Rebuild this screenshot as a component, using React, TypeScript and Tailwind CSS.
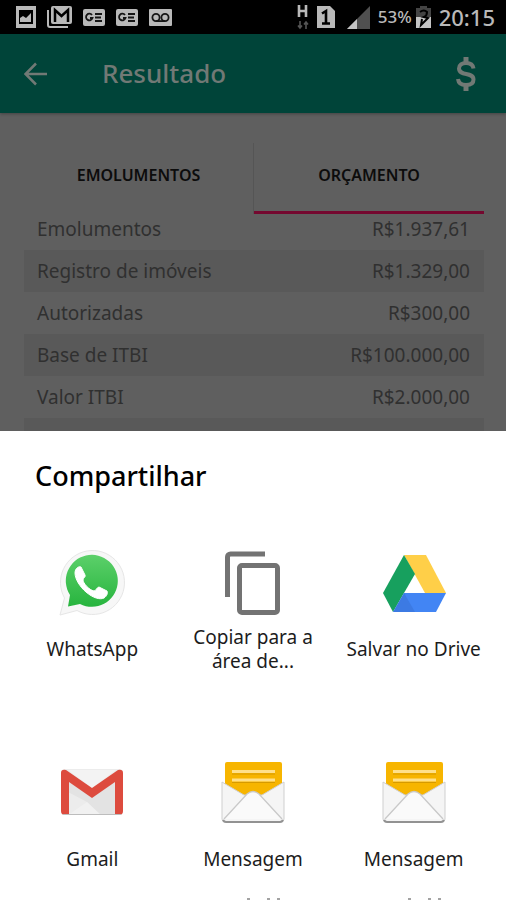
import type { ReactNode } from "react";

const budget = [
  ["Emolumentos", "R$1.937,61"],
  ["Registro de imóveis", "R$1.329,00"],
  ["Autorizadas", "R$300,00"],
  ["Base de ITBI", "R$100.000,00"],
  ["Valor ITBI", "R$2.000,00"],
  ["", ""],
];

function StatusBar() {
  return (
    <div className="flex h-[34px] shrink-0 items-center justify-between bg-black pl-4 pr-[11px] text-[#b9b9b9]">
      <div className="flex items-center gap-[11px]">
        <svg width="20" height="22" viewBox="0 0 20 22" aria-hidden="true">
          <path d="M0 0h20v22H0zM3 4v14h14V4z" fill="#b9b9b9" fillRule="evenodd" />
          <path d="M4 16v-4l3-2 3 2 5-5v9z" fill="#b9b9b9" />
        </svg>
        <svg width="25" height="22" viewBox="0 0 25 22" aria-hidden="true">
          <path d="M1 4v15a2 2 0 0 0 2 2h18" fill="none" stroke="#b9b9b9" strokeWidth="2" />
          <rect x="4" y="0" width="21" height="18" rx="2" fill="#b9b9b9" />
          <path d="M8 16V4l6.500 6L21 4v12" fill="none" stroke="#000" strokeWidth="2.500" />
        </svg>
        <NewsIcon />
        <NewsIcon />
        <svg width="23" height="17" viewBox="0 0 23 17" aria-hidden="true">
          <rect width="23" height="17" rx="1" fill="#b9b9b9" />
          <g fill="none" stroke="#151515" strokeWidth="1.800">
            <circle cx="7" cy="8.500" r="3.600" />
            <circle cx="16" cy="8.500" r="3.600" />
            <path d="M7 12.100h9" />
          </g>
        </svg>
      </div>
      <div className="flex items-center">
        <svg width="12" height="26" viewBox="0 0 12 26" className="mr-2" aria-hidden="true">
          <path d="M2 1v12M9 1v12M2 7h7" stroke="#b9b9b9" strokeWidth="2.600" />
          <path d="M3 17v7M1 21.500 3 24l2-2.500M9 25v-7M7 20.500 9 18l2 2.500" fill="none" stroke="#555" strokeWidth="1.600" />
        </svg>
        <svg width="18" height="22" viewBox="0 0 18 22" className="mr-3" aria-hidden="true">
          <path d="M0 0h13l5 5v17H0z" fill="#b9b9b9" />
          <path d="M5 7.500 9 5v12M5 17.500h8" fill="none" stroke="#000" strokeWidth="2.600" />
        </svg>
        <svg width="23" height="23" viewBox="0 0 23 23" className="mr-2" aria-hidden="true">
          <path d="M23 0v23H0z" fill="#505050" />
          <path d="M10 13v10H0z" fill="#c4c4c4" />
        </svg>
        <span className="text-[17px] font-medium">53%</span>
        <svg width="15" height="22" viewBox="0 0 15 22" className="ml-1 mr-2" aria-hidden="true">
          <path d="M4 0h7v2h4v20H0V2h4z" fill="#444" />
          <path d="M0 11h15v11H0z" fill="#c4c4c4" />
          <path d="M4 6q4-3 7 0 0 4-3 5l4 1-7 7 1-6" fill="none" stroke="#000" strokeWidth="2" />
        </svg>
        <span className="text-[22px] font-medium">20:15</span>
      </div>
    </div>
  );
}

function NewsIcon() {
  return (
    <svg width="22" height="17" viewBox="0 0 22 17" aria-hidden="true">
      <rect width="22" height="17" rx="2" fill="#b9b9b9" />
      <path d="M9 6a3.300 3.300 0 1 0 .5 3H7M12 5h7M12 8.500h6M12 12h7" fill="none" stroke="#151515" strokeWidth="1.800" />
    </svg>
  );
}

function WhatsAppIcon() {
  return (
    <svg width="70" height="70" viewBox="0 0 70 70" aria-hidden="true">
      <defs>
        <linearGradient id="wa" x1="0" y1="0" x2="0" y2="1">
          <stop offset="0" stopColor="#5cd06a" />
          <stop offset="1" stopColor="#27b43e" />
        </linearGradient>
      </defs>
      <path d="M3 68 7.500 51A32 32 0 1 1 20 63.500z" fill="#f7f7f7" stroke="#e6e6e6" strokeWidth="1" />
      <path d="M11 59.500 13 48A26 26 0 1 1 23 57z" fill="url(#wa)" />
      <path d="M24 20c-2-1-6 1-6 6 0 6 5 14 11 19 7 6 14 8 18 6 3-2 4-5 3-7l-8-4c-2 0-3 4-5 4-5-1-11-8-11-11 0-2 3-3 2-5z" fill="#fff" stroke="#fff" strokeWidth="1" />
    </svg>
  );
}

function CopyIcon() {
  return (
    <svg width="70" height="70" viewBox="0 0 70 70" fill="none" stroke="#737373" strokeWidth="5" aria-hidden="true">
      <path d="M9.500 50V10a3 3 0 0 1 3-3H47" />
      <rect x="21.500" y="18.500" width="38" height="47" rx="2.500" />
    </svg>
  );
}

function DriveIcon() {
  return (
    <svg width="70" height="70" viewBox="0 0 70 70" aria-hidden="true">
      <path d="M25 8h22l20 38H46z" fill="#ffcf48" />
      <path d="M25 8 36 27 14 65 4 46z" fill="#17a05e" />
      <path d="M25 46h42L57 65H14z" fill="#4285f4" />
      <path d="M25 46 14 65h22z" fill="#356fd2" opacity=".5" />
    </svg>
  );
}

function GmailIcon() {
  return (
    <svg width="70" height="70" viewBox="0 0 70 70" aria-hidden="true">
      <rect x="4" y="12" width="62" height="46" rx="4" fill="#ececec" />
      <path d="M11 22 35 39 59 22v36H43L30 45 11 35z" fill="#e3e3e3" />
      <path d="M11 58 30 45l14 13z" fill="#f1f1f1" />
      <path d="M11 13h48L35 31z" fill="#f3f3f3" />
      <path d="M4 16q0-4 5-3L35 31 61 13q5-1 5 3v38q0 4-4 4h-4V25L35 41 12 25v33H8q-4 0-4-4z" fill="#dd4b3e" />
      <path d="M6 57.500h58" stroke="#bdbdbd" strokeWidth="1" />
    </svg>
  );
}

function MessageIcon() {
  return (
    <svg width="70" height="70" viewBox="0 0 70 70" aria-hidden="true">
      <rect x="7" y="5" width="57" height="40" rx="2" fill="#f7b500" />
      <path d="M14 14.500h43M14 23h43" stroke="#ffe08a" strokeWidth="3" />
      <path d="M14 17h43M14 25.500h43" stroke="#d69a00" strokeWidth="1" />
      <path d="M4 25 26 38h18l22-13v37q0 3-3 3H7q-3 0-3-3z" fill="#f5f5f5" stroke="#cfcfcf" />
      <path d="M6 62 29 37q6-5 12 0l23 25" fill="#fafafa" stroke="#c9c9c9" strokeWidth="1.300" />
      <path d="M5 63q1 2 3 2h54q2 0 3-2" fill="none" stroke="#929292" strokeWidth="2" />
    </svg>
  );
}

const targets: { label: string; icon: ReactNode; detail?: boolean }[] = [
  { label: "WhatsApp", icon: <WhatsAppIcon /> },
  { label: "Copiar para a área de...", icon: <CopyIcon /> },
  { label: "Salvar no Drive", icon: <DriveIcon /> },
  { label: "Gmail", icon: <GmailIcon /> },
  { label: "Mensagem", icon: <MessageIcon />, detail: true },
  { label: "Mensagem", icon: <MessageIcon />, detail: true },
];

export default function App() {
  return (
    <div className="flex h-screen flex-col overflow-hidden bg-[#5f5f5f] font-['Noto_Sans',sans-serif]">
      <div className="flex h-[431px] shrink-0 flex-col overflow-hidden">
        <StatusBar />
        <header className="flex h-[79px] shrink-0 items-center bg-[#004439] px-5 text-[#717975] shadow-[0_1px_3px_rgba(0,0,0,0.3)]">
          <button aria-label="Voltar" className="flex size-8 items-center justify-center">
            <svg width="24" height="24" viewBox="0 0 24 24" fill="none" stroke="currentColor" strokeWidth="2.500" aria-hidden="true">
              <path d="M23 12H2M12 1.500 1.500 12 12 22.500" />
            </svg>
          </button>
          <h1 className="ml-[50px] flex-1 text-[26px] font-medium">Resultado</h1>
          <button aria-label="Valores" className="flex size-10 items-center justify-center">
            <svg width="20" height="34" viewBox="0 0 20 34" fill="none" stroke="currentColor" strokeWidth="4" aria-hidden="true">
              <path d="M17.500 11.500C17 7.500 14 6 10 6s-7 2-7 5.500c0 8 14.500 3 14.500 11 0 4-3.500 5.500-7.500 5.500s-7.500-1.500-8-6" />
              <path d="M10 0v6M10 28v6" strokeWidth="5" />
            </svg>
          </button>
        </header>
        <main className="pt-[30px] pr-[22px] pl-6">
          <div role="tablist" className="grid grid-cols-2 text-base font-semibold text-[#0c0c0c]">
            <button role="tab" aria-selected="false" className="h-[71px] border-r border-[#555] pb-2">
              EMOLUMENTOS
            </button>
            <button role="tab" aria-selected="true" className="h-[71px] border-b-3 border-[#74082f] pb-[5px]">
              ORÇAMENTO
            </button>
          </div>
          <table className="-mt-[6px] w-full text-[19px] leading-6 text-[#303030]">
            <tbody>
              {budget.map(([name, value], i) => (
                <tr key={i} className="h-[42px] even:bg-[#595959]">
                  <th scope="row" className="pl-[13px] text-left font-normal">
                    {name}
                  </th>
                  <td className="pr-[14px] text-right">{value}</td>
                </tr>
              ))}
            </tbody>
          </table>
        </main>
      </div>
      <section aria-labelledby="share-title" className="flex-1 overflow-hidden bg-white text-[#1c1c1c]">
        <h2 id="share-title" className="px-[35px] pt-[25px] text-[27px] leading-10 font-medium text-black">
          Compartilhar
        </h2>
        <div className="grid grid-cols-3 px-3 pt-[51px]">
          {targets.map(({ label, icon, detail }, i) => (
            <button key={i} className="flex h-[210px] flex-col items-center text-[19px] leading-6">
              {icon}
              <span className="flex h-16 w-full items-center justify-center px-3">{label}</span>
              {detail && (
                <svg width="34" height="2" viewBox="0 0 34 2" className="mt-[7px] ml-5 shrink-0" aria-hidden="true">
                  <path d="M1 1h3M21 1h3M31 1h3" stroke="#a3a3a3" strokeWidth="2" />
                </svg>
              )}
            </button>
          ))}
        </div>
      </section>
    </div>
  );
}
